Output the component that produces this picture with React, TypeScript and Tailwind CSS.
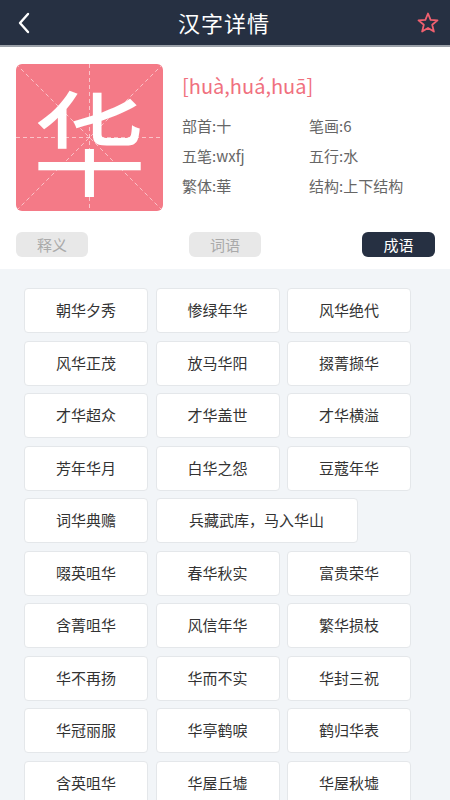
import React from 'react';

const idioms: { text: string; wide?: boolean }[] = [
  { text: '朝华夕秀' }, { text: '惨绿年华' }, { text: '风华绝代' },
  { text: '风华正茂' }, { text: '放马华阳' }, { text: '掇菁撷华' },
  { text: '才华超众' }, { text: '才华盖世' }, { text: '才华横溢' },
  { text: '芳年华月' }, { text: '白华之怨' }, { text: '豆蔻年华' },
  { text: '词华典赡' }, { text: '兵藏武库，马入华山', wide: true },
  { text: '啜英咀华' }, { text: '春华秋实' }, { text: '富贵荣华' },
  { text: '含菁咀华' }, { text: '风信年华' }, { text: '繁华损枝' },
  { text: '华不再扬' }, { text: '华而不实' }, { text: '华封三祝' },
  { text: '华冠丽服' }, { text: '华亭鹤唳' }, { text: '鹤归华表' },
  { text: '含英咀华' }, { text: '华屋丘墟' }, { text: '华屋秋墟' },
];

const info = [
  ['部首:十', '笔画:6'],
  ['五笔:wxfj', '五行:水'],
  ['繁体:華', '结构:上下结构'],
];

const font = { fontFamily: '"Noto Sans CJK SC", "Noto Sans", sans-serif' };

export default function App() {
  return (
    <div className="w-[450px] h-[800px] overflow-hidden bg-[#f2f5f8]" style={font}>
      <header className="h-[47px] bg-[#263042] flex items-center justify-between px-3 border-b-2 border-[#9aa0a8]">
        <svg width="16" height="22" viewBox="0 0 16 22" className="ml-[4px]">
          <path d="M12 2 L4 11 L12 20" fill="none" stroke="white" strokeWidth="2.4" strokeLinecap="round" strokeLinejoin="round" />
        </svg>
        <h1 className="text-white text-[22px] tracking-[1px] font-normal">汉字详情</h1>
        <svg width="24" height="24" viewBox="0 0 24 24" className="mr-[-2px]">
          <path d="M12 2.5 L14.6 8.9 L21.5 9.4 L16.2 13.8 L17.9 20.6 L12 16.9 L6.1 20.6 L7.8 13.8 L2.5 9.4 L9.4 8.9 Z" fill="none" stroke="#f0606f" strokeWidth="1.8" strokeLinejoin="round" />
        </svg>
      </header>

      <section className="bg-white pt-[17px] pl-[16px] pr-[15px]">
        <div className="flex">
          <div className="relative w-[147px] h-[147px] rounded-[6px] bg-[#f47a87] flex items-center justify-center">
            <div className="absolute inset-0 rounded-[6px] overflow-hidden">
              <svg width="147" height="147" viewBox="0 0 147 147">
                <g stroke="#ffffff" strokeOpacity="0.55" strokeWidth="1" strokeDasharray="4 3" fill="none">
                  <line x1="73.5" y1="0" x2="73.5" y2="147" />
                  <line x1="0" y1="73.5" x2="147" y2="73.5" />
                  <line x1="0" y1="0" x2="147" y2="147" />
                  <line x1="147" y1="0" x2="0" y2="147" />
                </g>
              </svg>
            </div>
            <span className="relative text-white text-[114px] leading-none font-normal">华</span>
          </div>
          <div className="ml-[19px] pt-[10px] flex-1">
            <div className="text-[#f0707e] text-[20px] leading-[24px]">[huà,huá,huā]</div>
            <div className="mt-[17px] flex flex-col gap-[9px]">
              {info.map((row) => (
                <div key={row[0]} className="flex text-[15px] leading-[21px] text-[#666666]">
                  <span className="w-[127px]">{row[0]}</span>
                  <span>{row[1]}</span>
                </div>
              ))}
            </div>
          </div>
        </div>
        <div className="flex justify-between items-center pt-[21px] pb-[12px]">
          <button className="w-[72px] h-[25px] rounded-[6px] bg-[#e8e8e8] text-[#aaaaaa] text-[15px] leading-none">释义</button>
          <button className="w-[72px] h-[25px] rounded-[6px] bg-[#e8e8e8] text-[#aaaaaa] text-[15px] leading-none">词语</button>
          <button className="w-[73px] h-[25px] rounded-[6px] bg-[#263042] text-white text-[15px] leading-none">成语</button>
        </div>
      </section>

      <section className="pt-[19px] pl-[24px] pr-[24px]">
        <div className="flex flex-wrap gap-x-[7.5px] gap-y-[7.5px]">
          {idioms.map((i) => (
            <div
              key={i.text}
              className={`${i.wide ? 'w-[202px]' : 'w-[124px]'} h-[45px] bg-white border border-[#e4e7ea] rounded-[4px] flex items-center justify-center text-[15px] text-[#333333]`}
            >
              {i.text}
            </div>
          ))}
        </div>
      </section>
    </div>
  );
}
